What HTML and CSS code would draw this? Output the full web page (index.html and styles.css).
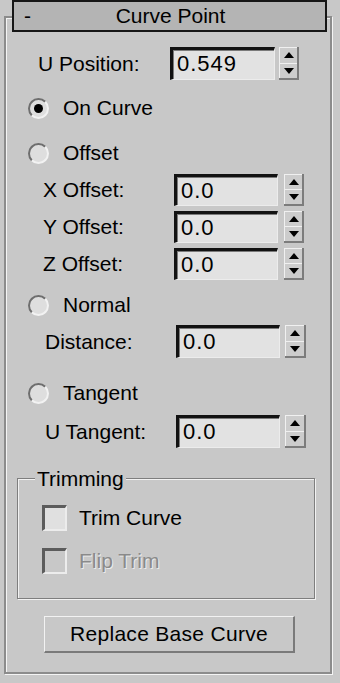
FILE: index.html
```html
<!DOCTYPE html>
<html>
<head>
<meta charset="utf-8">
<link rel="stylesheet" href="styles.css">
</head>
<body>
<div class="frame">
  <div class="header">
    <span class="minus">-</span>
    <span class="title">Curve Point</span>
    <span></span>
  </div>

  <div class="row row-upos">
    <span class="lbl lbl-upos">U Position:</span>
    <div class="field field-upos">0.549</div>
    <div class="arrows arrows-upos"><span class="half"><i class="tri-up"></i></span><span class="half"><i class="tri-down"></i></span></div>
  </div>

  <div class="radio-row rr-oncurve">
    <span class="radio"><span class="dot"></span></span>
    <span class="rtext">On Curve</span>
  </div>

  <div class="radio-row rr-offset">
    <span class="radio"></span>
    <span class="rtext">Offset</span>
  </div>

  <div class="row row-x">
    <span class="lbl lbl-off">X Offset:</span>
    <div class="field">0.0</div>
    <div class="arrows"><span class="half"><i class="tri-up"></i></span><span class="half"><i class="tri-down"></i></span></div>
  </div>
  <div class="row row-y">
    <span class="lbl lbl-off">Y Offset:</span>
    <div class="field">0.0</div>
    <div class="arrows"><span class="half"><i class="tri-up"></i></span><span class="half"><i class="tri-down"></i></span></div>
  </div>
  <div class="row row-z">
    <span class="lbl lbl-off">Z Offset:</span>
    <div class="field">0.0</div>
    <div class="arrows"><span class="half"><i class="tri-up"></i></span><span class="half"><i class="tri-down"></i></span></div>
  </div>

  <div class="radio-row rr-normal">
    <span class="radio"></span>
    <span class="rtext">Normal</span>
  </div>

  <div class="row row-dist">
    <span class="lbl lbl-dist">Distance:</span>
    <div class="field field-tall">0.0</div>
    <div class="arrows arrows-tall"><span class="half"><i class="tri-up"></i></span><span class="half"><i class="tri-down"></i></span></div>
  </div>

  <div class="radio-row rr-tangent">
    <span class="radio"></span>
    <span class="rtext">Tangent</span>
  </div>

  <div class="row row-utan">
    <span class="lbl lbl-dist">U Tangent:</span>
    <div class="field field-tall">0.0</div>
    <div class="arrows arrows-tall"><span class="half"><i class="tri-up"></i></span><span class="half"><i class="tri-down"></i></span></div>
  </div>

  <div class="group">
    <span class="legend">Trimming</span>
    <div class="check-row cr-trim">
      <span class="check"></span>
      <span class="ctext">Trim Curve</span>
    </div>
    <div class="check-row cr-flip">
      <span class="check check-disabled"></span>
      <span class="ctext ctext-disabled">Flip Trim</span>
    </div>
  </div>

  <div class="button">Replace Base Curve</div>
</div>
</body>
</html>
```

FILE: styles.css
```css
html, body {
  margin: 0;
  padding: 0;
}
body {
  width: 340px;
  height: 683px;
  background: #c8c8c8;
  font-family: "Liberation Sans", Arial, sans-serif;
  font-size: 21px;
  color: #000;
  overflow: hidden;
}
.frame {
  box-sizing: border-box;
  margin: 16px 0 0 4px;
  width: 328px;
  height: 658px;
  border: 2px solid #8c8c8c;
  box-shadow: inset 1px 1px 0 #f4f4f4, 1px 1px 0 #f4f4f4;
  display: flex;
  flex-direction: column;
}
.header {
  box-sizing: border-box;
  margin: -18px 0 0 6px;
  width: 315px;
  height: 32px;
  border: 2px solid #161616;
  background: #b4b4b4;
  display: grid;
  grid-template-columns: 1fr auto 1fr;
  align-items: center;
  line-height: 26px;
}
.minus {
  padding-left: 10px;
}
.title {
  padding-left: 2px;
}

/* spinner rows */
.row {
  display: flex;
  align-items: center;
  height: 32px;
}
.row-upos { margin-top: 15px; height: 33px; }
.row-x { margin-top: 6px; }
.row-y { margin-top: 5px; }
.row-z { margin-top: 5px; }
.row-dist { margin-top: 5px; height: 33px; }
.row-utan { margin-top: 7px; height: 33px; }

.lbl {
  box-sizing: border-box;
  flex: none;
}
.lbl-upos { padding-left: 32px; width: 164px; }
.lbl-off { padding-left: 37px; width: 168px; }
.lbl-dist { padding-left: 39px; width: 170px; }

.field {
  box-sizing: border-box;
  width: 104px;
  height: 100%;
  background: #e2e2e2;
  border-top: 3px solid #121212;
  border-left: 3px solid #121212;
  border-right: 1px solid #ececec;
  border-bottom: 1px solid #ececec;
  box-shadow: inset 1px 1px 0 #7a7a7a;
  padding-left: 4px;
  line-height: 27px;
  font-size: 22px;
  letter-spacing: 1px;
}
.field-upos { width: 105px; }

.arrows {
  box-sizing: border-box;
  margin-left: 6px;
  width: 20px;
  height: 100%;
  display: flex;
  flex-direction: column;
  border-right: 2px solid #7c7c7c;
  border-bottom: 2px solid #7c7c7c;
}
.arrows-upos { margin-left: 4px; }
.arrows-tall { margin-left: 5px; width: 21px; }
.half {
  flex: 1;
  display: flex;
  align-items: center;
  justify-content: center;
  background: #cccccc;
  border-top: 1px solid #f0f0f0;
  border-left: 1px solid #f0f0f0;
}
.tri-up {
  width: 0;
  height: 0;
  border-left: 5px solid transparent;
  border-right: 5px solid transparent;
  border-bottom: 6px solid #000;
}
.tri-down {
  width: 0;
  height: 0;
  border-left: 5px solid transparent;
  border-right: 5px solid transparent;
  border-top: 6px solid #000;
}

/* radio rows */
.radio-row {
  display: flex;
  align-items: center;
  height: 30px;
  padding-left: 22px;
}
.rr-oncurve { margin-top: 13px; }
.rr-offset { margin-top: 15px; }
.rr-normal { margin-top: 10px; }
.rr-tangent { margin-top: 20px; }
.radio {
  box-sizing: border-box;
  flex: none;
  width: 21px;
  height: 21px;
  border-radius: 50%;
  border: 2px solid;
  border-color: #6e6e6e #f2f2f2 #f2f2f2 #6e6e6e;
  background: #dedede;
  display: flex;
  align-items: center;
  justify-content: center;
}
.dot {
  width: 9px;
  height: 9px;
  border-radius: 50%;
  background: #000;
}
.rtext {
  margin-left: 14px;
}

/* group */
.group {
  box-sizing: border-box;
  margin: 30px 0 0 11px;
  width: 298px;
  height: 121px;
  border: 1px solid #7e7e7e;
  box-shadow: inset 1px 1px 0 #f2f2f2, 1px 1px 0 #f2f2f2;
  display: flex;
  flex-direction: column;
  align-items: flex-start;
}
.legend {
  margin: -13px 0 0 17px;
  padding: 0 2px;
  line-height: 26px;
  background: #c8c8c8;
}
.check-row {
  display: flex;
  align-items: center;
  height: 26px;
  padding-left: 24px;
}
.cr-trim { margin-top: 13px; }
.cr-flip { margin-top: 17px; }
.check {
  box-sizing: border-box;
  flex: none;
  width: 25px;
  height: 26px;
  background: #e0e0e0;
  border-top: 3px solid #5c5c5c;
  border-left: 3px solid #5c5c5c;
  border-right: 2px solid #ececec;
  border-bottom: 2px solid #ececec;
}
.check-disabled {
  background: #c8c8c8;
}
.ctext {
  margin-left: 12px;
}
.ctext-disabled {
  color: #8a8a8a;
  text-shadow: 1px 1px 0 #ececec;
}

/* button */
.button {
  box-sizing: border-box;
  margin: 17px 0 0 38px;
  width: 251px;
  height: 37px;
  background: #c8c8c8;
  border-top: 1px solid #f2f2f2;
  border-left: 1px solid #f2f2f2;
  border-right: 2px solid #7a7a7a;
  border-bottom: 2px solid #7a7a7a;
  display: flex;
  align-items: center;
  justify-content: center;
  letter-spacing: 0.3px;
}
```
